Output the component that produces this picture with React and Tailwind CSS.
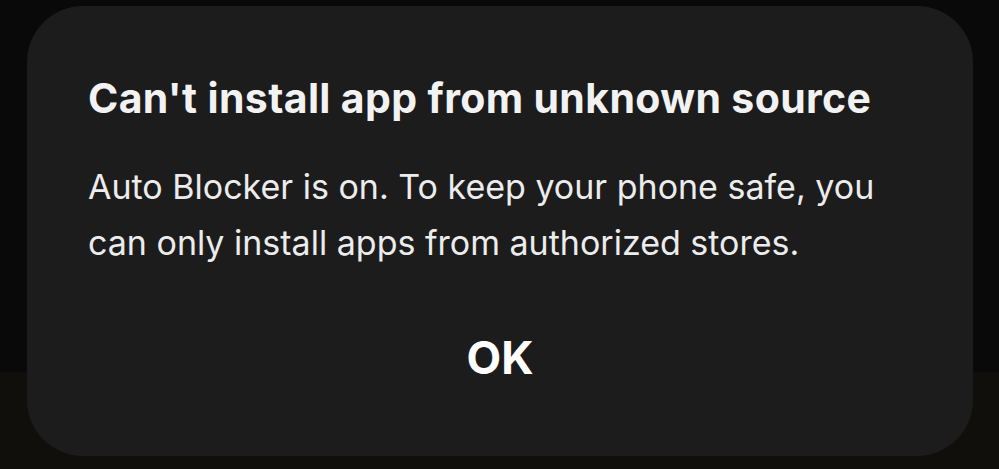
import React from "react";

const App = () => {
  return (
    <div
      className="w-[999px] h-[469px] overflow-hidden bg-[linear-gradient(to_bottom,#090909_372px,#110f0b_372px)] pt-[6px] pl-[27px]"
      style={{ fontFamily: "Inter, 'Noto Sans', sans-serif" }}
    >
      <div className="w-[946px] h-[450px] rounded-[56px] bg-[#1c1c1c] flex flex-col px-[61px]">
        <h1 className="mt-[68px] text-[41px] leading-[49px] font-bold text-[#f2f2f2] tracking-[0.35px] whitespace-nowrap">
          Can't install app from unknown source
        </h1>
        <p className="mt-[36px] text-[34px] leading-[56px] text-[#ececec] whitespace-nowrap">
          Auto Blocker is on. To keep your phone safe, you
          <br />
          can only install apps from authorized stores.
        </p>
        <div className="flex justify-center mt-[60px]">
          <button className="text-[45px] font-bold text-white leading-[54px]">OK</button>
        </div>
      </div>
    </div>
  );
};

export default App;
